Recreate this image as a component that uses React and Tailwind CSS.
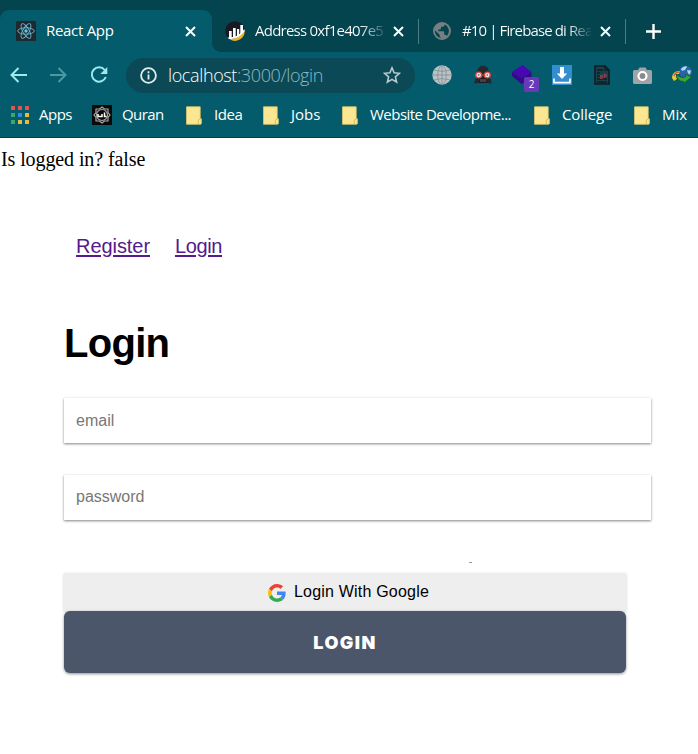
import React from "react";

function ReactLogo() {
  return (
    <svg className="h-5 w-5 shrink-0" viewBox="0 0 20 20">
      <rect width="20" height="20" rx="1.5" fill="#20272d" />
      <g fill="none" stroke="#66b9d6" strokeWidth="0.9">
        <ellipse cx="10" cy="10" rx="8.3" ry="3.2" />
        <ellipse cx="10" cy="10" rx="8.3" ry="3.2" transform="rotate(60 10 10)" />
        <ellipse cx="10" cy="10" rx="8.3" ry="3.2" transform="rotate(120 10 10)" />
      </g>
      <circle cx="10" cy="10" r="1.7" fill="#66c5e6" />
    </svg>
  );
}

function ChartLogo() {
  return (
    <svg className="h-5 w-5 shrink-0" viewBox="0 0 20 20">
      <circle cx="10" cy="10" r="9.8" fill="#171a24" />
      <path d="M19.7 9.5A9.8 9.8 0 0 1 4.5 18.2C12 17.5 17 14 19.7 9.500Z" fill="#e8b62c" />
      <path d="M4 10h2.700v7H4zM8 7h2.700v9.500H8zM12 8h2.200v7.500H12zM15.300 4H18v7l-2.700 3z" fill="#fff" />
      <path d="M2.500 16.500C10 16.500 15.500 14 19.200 8L19.800 10C16 15.500 11 18 4 18Z" fill="#fff" />
    </svg>
  );
}

function Earth() {
  return (
    <svg className="h-[18px] w-[18px] shrink-0" viewBox="0 0 24 24" fill="#777f83">
      <path d="M12 0a12 12 0 1 0 0 24 12 12 0 0 0 0-24Zm-2 21.2A9.4 9.4 0 0 1 2.6 11l6.2 6.1v1.2c0 1 .5 1.7 1.4 1.9Zm8.4-2.7c-.4-1-1.2-1.6-2.3-1.6h-1.2v-3.5c0-.7-.5-1.2-1.2-1.2H7v-2.3h2.4c.7 0 1.2-.5 1.2-1.2V6.3H13c1.3 0 2.3-1 2.3-2.3v-.8a9.4 9.4 0 0 1 3.1 15.3Z" />
    </svg>
  );
}

function Close() {
  return (
    <svg className="h-[11px] w-[11px] shrink-0" viewBox="0 0 11 11" stroke="#f5ffff" strokeWidth="2">
      <path d="m1 1 9 9M10 1l-9 9" />
    </svg>
  );
}

function Folder() {
  return (
    <svg className="h-[19px] w-4 shrink-0" viewBox="0 0 16 19">
      <path d="M.5 .8h13.700v12h1.200v4.900L14.500 18.300H.5Z" fill="#fbe691" stroke="#e3c765" strokeWidth=".8" />
      <path d="M12.300 18v-3.500q0-1.200 2-1.500" fill="none" stroke="#d9b94f" strokeWidth=".9" />
    </svg>
  );
}

function Tabs() {
  return (
    <div className="flex h-[52px] items-end bg-[#04444f] text-[15px] leading-5 text-white">
      <div className="flex h-[42px] w-[212px] shrink-0 items-center rounded-t-[9px] bg-[#045b6b] pl-4">
        <ReactLogo />
        <span className="mb-[2px] ml-[10px] w-[139px] whitespace-nowrap tracking-[-0.3px]">React App</span>
        <Close />
      </div>
      <div className="h-[42px] w-[486px] shrink-0 bg-[#045b6b]">
        <div className="flex h-full items-center rounded-bl-[9px] bg-[#04444f] pl-[13px]">
          <ChartLogo />
          <span className="mb-[2px] ml-[10px] w-[128px] shrink-0 bg-linear-to-r from-white from-82% to-[#31656e] bg-clip-text whitespace-nowrap tracking-[-0.76px] text-transparent">Address 0xf1e407e5</span>
          <span className="ml-[10px] flex"><Close /></span>
          <i className="mx-[14px] h-[25px] w-px shrink-0 bg-[#517b82]" />
          <Earth />
          <span className="mb-[2px] ml-[11px] w-[129px] shrink-0 bg-linear-to-r from-white from-82% to-[#17505a] bg-clip-text whitespace-nowrap tracking-[-0.88px] text-transparent">#10 | Firebase di Rea</span>
          <span className="ml-[9px] flex"><Close /></span>
          <i className="ml-[14px] h-[25px] w-px shrink-0 bg-[#517b82]" />
          <svg className="ml-5 h-[15px] w-[15px] shrink-0" viewBox="0 0 15 15" stroke="#fff" strokeWidth="2.4"><path d="M0 7.5h15M7.5 0v15" /></svg>
        </div>
      </div>
    </div>
  );
}

function Toolbar() {
  return (
    <div className="flex h-[46px] items-center bg-[#045b6b] pl-[10px]">
      <svg className="h-4 w-[17px] shrink-0" viewBox="0 0 17 16" fill="none" stroke="#9ce9ef" strokeWidth="2"><path d="M17 8H2M8.5 1 1.5 8l7 7" /></svg>
      <svg className="ml-[23px] h-4 w-[17px] shrink-0" viewBox="0 0 17 16" fill="none" stroke="#4d99a1" strokeWidth="2"><path d="M0 8h15M8.5 1l7 7-7 7" /></svg>
      <svg className="ml-[23px] h-[18px] w-[18px] shrink-0" viewBox="0 0 18 18" fill="none" stroke="#9ce9ef" strokeWidth="2"><path d="M14.700 4A7.200 7.200 0 1 0 15.800 11" /><path d="M17.300 1v7h-7Z" fill="#9ce9ef" stroke="none" /></svg>
      <div className="ml-[18px] flex h-[35px] w-[289px] shrink-0 items-center rounded-full bg-[#0b4957] pl-[14px]">
        <svg className="h-[17px] w-[17px]" viewBox="0 0 17 17" fill="none" stroke="#e1eef1" strokeWidth="1.8"><circle cx="8.5" cy="8.5" r="7.4" /><path d="M8.5 7.5v5M8.5 4.3v1.9" /></svg>
        <span className="ml-[11px] w-[215px] whitespace-nowrap text-[18px] font-light tracking-[-0.38px] text-[#8db9c2]"><span className="text-white">localhost</span>:3000/login</span>
        <svg className="h-[18px] w-[18px]" viewBox="0 0 18 18" fill="none" stroke="#b8cace" strokeWidth="1.6"><path d="m9 1.8 2.1 5 5.4.5-4.1 3.6 1.2 5.3L9 13.4l-4.6 2.8 1.2-5.3-4.1-3.6 5.4-.5Z" /></svg>
      </div>
      <svg className="ml-[17px] h-5 w-5 shrink-0" viewBox="0 0 20 20">
        <circle cx="10" cy="10" r="9.7" fill="#bcc1c3" />
        <g fill="none" stroke="#7f9195" strokeWidth=".8"><ellipse cx="10" cy="10" rx="4.3" ry="9.5" /><path d="M10 0v20M0 10h20M2 5q8 3 16 0M2 15q8-3 16 0" /></g>
      </svg>
      <svg className="ml-[21px] h-5 w-5 shrink-0" viewBox="0 0 20 20">
        <path d="M4 9C4 3 6.500 .8 10 .8S16 3 16 9l3 9.500-4-.5H5l-4 .5Z" fill="#24292f" />
        <path d="m7 13-1 5h8l-1-5Z" fill="#17191d" />
        <path d="M8 14v3M10 14v3M12 14v3" stroke="#6a7074" />
        <g fill="#f5e9e5" stroke="#d94942" strokeWidth="1.4"><circle cx="5.700" cy="10" r="2.900" /><circle cx="14.300" cy="10" r="2.900" /></g>
        <path d="M8.500 10h3" stroke="#d94942" /><path d="M5 10h1.500M13.500 10H15" stroke="#333" />
      </svg>
      <div className="relative ml-[19px] h-5 w-5 shrink-0">
        <svg className="h-5 w-5" viewBox="0 0 20 20"><path d="m10.500 0 9 7-10 6L0 7Z" fill="#4907b4" /><path d="m0 7 9.500 6 10-6v5l-10 7L0 11Z" fill="#34098a" /></svg>
        <span className="absolute top-3 left-3 flex h-[15px] w-[15px] items-center justify-center rounded-[2px] bg-[#693ab8] text-[10px] text-white">2</span>
      </div>
      <svg className="ml-5 h-5 w-5 shrink-0" viewBox="0 0 20 20">
        <rect width="20" height="20" fill="#338ed0" />
        <path d="M8 2h4v6.500h3.200L10 14 4.800 8.500H8Z" fill="#fff" /><path d="M2 13.500v4.200h16v-4.200" fill="none" stroke="#fff" strokeWidth="1.700" />
      </svg>
      <svg className="ml-[22px] h-5 w-4 shrink-0" viewBox="0 0 16 20">
        <path d="M1 1h10l4 4v14H1Z" fill="#17424d" stroke="#111c22" strokeWidth="1.6" /><path d="M11 1v4h4M3 5h6M3 8h3M3 11h3M3 14h10M3 17h10" fill="none" stroke="#111c22" strokeWidth="1.3" />
        <text x="5.500" y="12.5" fill="#a54045" fontSize="6" fontWeight="bold">gP</text>
      </svg>
      <svg className="ml-[23px] h-[17px] w-[19px] shrink-0" viewBox="0 0 19 17">
        <path d="M1.5 3H5l1.5-2.5h6L14 3h3.5Q19 3 19 4.5v11q0 1.5-1.5 1.5h-16Q0 17 0 15.500v-11Q0 3 1.500 3Z" fill="#a0a4a6" /><circle cx="9.500" cy="9" r="4" fill="#858b8e" stroke="#fff" strokeWidth="2.200" />
      </svg>
      <svg className="ml-5 h-5 w-5 shrink-0" viewBox="0 0 20 20">
        <circle cx="13.500" cy="7" r="6.400" fill="#2a62a8" />
        <path d="M9 4c2-3 6-3.500 6-2l-2 3c-2 1-4 1-4-1ZM15 5l4 .5-1 4-2-1Z" fill="#a9dbe4" />
        <path d="M0 13C0 9 3 5.500 8 6l-1 3c-3 0-3.500 2-2 5l-3 2Z" fill="#eac936" />
        <path d="M2 11q1-4 6-4" fill="none" stroke="#d94834" strokeWidth="1.200" />
        <path d="M4 9q5 5 9.500 3V9.500l6 2.500-8 6.500v-2Q6 17 4 9Z" fill="#35a83c" stroke="#155c24" strokeWidth=".8" />
      </svg>
    </div>
  );
}

function Bookmarks() {
  const colors = ["bg-[#e5534b]", "bg-[#e5534b]", "bg-[#e5534b]", "bg-[#35a86a]", "bg-[#3488e8]", "bg-[#e9b93b]", "bg-[#35a86a]", "bg-[#e9b93b]", "bg-[#e9b93b]"];
  return (
    <div className="flex h-10 items-center overflow-hidden border-b border-[#063e49] bg-[#045b6b] pb-[5px] pl-[11px] text-[15px] leading-5 whitespace-nowrap text-white">
      <div className="grid shrink-0 grid-cols-[repeat(3,4px)] gap-x-[3px] gap-y-[3px]">{colors.map((c, i) => <i key={i} className={"h-1 w-1 " + c} />)}</div>
      <span className="mb-[2px] ml-[10px] w-[53px] shrink-0 tracking-[-0.5px]">Apps</span>
      <svg className="h-5 w-5 shrink-0" viewBox="0 0 20 20"><rect width="20" height="20" fill="#090909" /><g fill="none" stroke="#a9a9a9" strokeWidth="1.2"><path d="m10 2 2.500 2H16v3.500l2 2.500-2 2.500V16h-3.500L10 18l-2.500-2H4v-3.500L2 10l2-2.500V4h3.500Z" /><circle cx="10" cy="10" r="5.500" /></g><path d="M6 9v2.500h4V9M12.500 7.500v4H14.500" fill="none" stroke="#fff" strokeWidth="1.500" /></svg>
      <span className="mb-[2px] ml-[10px] w-16 shrink-0 tracking-[-0.6px]">Quran</span>
      <Folder /><span className="mb-[2px] ml-3 w-[49px] shrink-0 tracking-[-0.4px]">Idea</span>
      <Folder /><span className="mb-[2px] ml-3 w-[51px] shrink-0">Jobs</span>
      <Folder /><span className="mb-[2px] ml-3 w-[164px] shrink-0 tracking-[-0.52px]">Website Developme...</span>
      <Folder /><span className="mb-[2px] ml-3 w-[72px] shrink-0 tracking-[-0.1px]">College</span>
      <Folder /><span className="mb-[2px] ml-3 shrink-0">Mix</span>
    </div>
  );
}

function GoogleLogo() {
  return (
    <svg className="mt-[2px] h-[18px] w-[18px]" viewBox="0 0 48 48">
      <path fill="#EA4335" d="M24 9.500c3.540 0 6.710 1.220 9.210 3.600l6.850-6.850C35.900 2.380 30.470 0 24 0 14.620 0 6.510 5.380 2.560 13.220l7.980 6.190C12.430 13.720 17.740 9.500 24 9.500z" />
      <path fill="#4285F4" d="M46.980 24.550c0-1.570-.15-3.090-.38-4.550H24v9.020h12.940c-.58 2.960-2.260 5.480-4.780 7.180l7.730 6c4.510-4.180 7.090-10.360 7.090-17.650z" />
      <path fill="#FBBC05" d="M10.530 28.590A14.500 14.500 0 0 1 9.770 24c0-1.600.27-3.140.76-4.590l-7.980-6.190A23.990 23.990 0 0 0 0 24c0 3.880.92 7.540 2.560 10.780l7.970-6.190z" />
      <path fill="#34A853" d="M24 48c6.480 0 11.930-2.130 15.890-5.810l-7.730-6c-2.150 1.450-4.920 2.300-8.160 2.300-6.260 0-11.570-4.220-13.470-9.910l-7.980 6.190C6.510 42.620 14.620 48 24 48z" />
    </svg>
  );
}

export default function App() {
  const field = "block h-[45px] w-[587px] bg-white px-3 text-base text-black shadow-[0_1px_3px_rgba(0,0,0,0.2),0_1px_2px_rgba(0,0,0,0.32)] outline-none placeholder:text-[#777]";
  return (
    <div className="h-[754px] w-[698px] overflow-hidden bg-white font-['Liberation_Sans',sans-serif]">
      <header className="font-['Open_Sans',sans-serif]"><Tabs /><Toolbar /><Bookmarks /></header>
      <p className="mt-[7px] ml-px h-7 font-['Liberation_Serif',serif] text-[20px] leading-7 tracking-[-0.1px] text-black">Is logged in? false</p>
      <nav className="mt-[59px] flex h-7 gap-[25px] pl-[76px] text-[20px] leading-7 text-[#551a8b] underline decoration-2 underline-offset-2"><a className="tracking-[-0.06px]">Register</a><a className="tracking-[-0.4px]">Login</a></nav>
      <main className="ml-16">
        <h1 className="mt-[58px] h-[52px] text-[40px] leading-[50px] font-bold tracking-[-0.7px] text-black">Login</h1>
        <form className="mt-7">
          <input className={field} placeholder="email" />
          <input className={field + " mt-8 pb-[2px]"} placeholder="password" />
          <div className="flex h-[53px] items-center pb-[1px] pl-[405px]">
            <i className="mt-[33px] h-px w-[3px] bg-[#999]" />
          </div>
          <button type="button" className="flex h-[38px] w-[562px] items-center justify-center gap-2 bg-[#eee] pl-[7px] text-base tracking-[0.2px] text-black shadow-[0_1px_3px_rgba(0,0,0,0.2)]"><GoogleLogo />Login With Google</button>
          <button type="button" className="relative block h-[62px] w-[562px] rounded-[6px] bg-[#4c566a] text-center font-['Inter',sans-serif] text-[18px] font-black tracking-[1.4px] text-white shadow-[0_1px_3px_rgba(0,0,0,0.45)]">LOGIN</button>
        </form>
      </main>
    </div>
  );
}
